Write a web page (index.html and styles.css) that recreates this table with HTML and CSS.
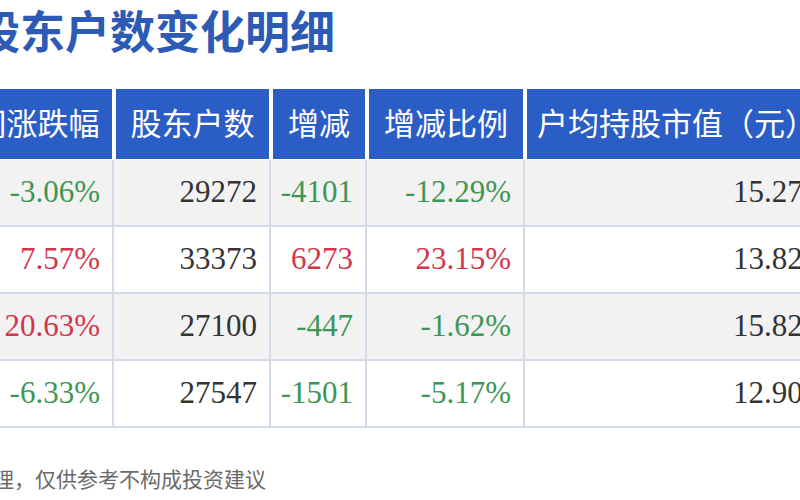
FILE: index.html
```html
<!DOCTYPE html>
<html lang="zh">
<head>
<meta charset="utf-8">
<link rel="stylesheet" href="styles.css">
</head>
<body>
<div class="page">
  <h1 class="title">股东户数变化明细</h1>
  <div class="table">
    <div class="th">区间涨跌幅</div>
    <div class="th">股东户数</div>
    <div class="th">增减</div>
    <div class="th">增减比例</div>
    <div class="th th-wide">户均持股市值（元）</div>

    <div class="td alt down">-3.06%</div>
    <div class="td alt">29272</div>
    <div class="td alt down">-4101</div>
    <div class="td alt down">-12.29%</div>
    <div class="td alt last"><span>15.27</span></div>

    <div class="td up">7.57%</div>
    <div class="td">33373</div>
    <div class="td up">6273</div>
    <div class="td up">23.15%</div>
    <div class="td last"><span>13.82</span></div>

    <div class="td alt up">20.63%</div>
    <div class="td alt">27100</div>
    <div class="td alt down">-447</div>
    <div class="td alt down">-1.62%</div>
    <div class="td alt last"><span>15.82</span></div>

    <div class="td down">-6.33%</div>
    <div class="td">27547</div>
    <div class="td down">-1501</div>
    <div class="td down">-5.17%</div>
    <div class="td last"><span>12.90</span></div>
  </div>
  <p class="note">理，仅供参考不构成投资建议</p>
</div>
</body>
</html>
```
FILE: styles.css
```css
html, body {
  margin: 0;
  padding: 0;
  background: #ffffff;
  width: 800px;
  height: 500px;
  overflow: hidden;
}
.page {
  width: 800px;
  height: 500px;
  overflow: hidden;
  font-family: "Noto Sans CJK SC", "Noto Sans", sans-serif;
}
.title {
  margin: 0 0 29px -25px;
  height: 60px;
  font-size: 45px;
  line-height: 60px;
  font-weight: 700;
  color: #2c5ab4;
  white-space: nowrap;
}
.table {
  display: grid;
  grid-template-columns: 184px 157px 96px 158px 330px;
  grid-template-rows: 71px 67px 67px 67px 67px;
  margin-left: -70px;
  width: 925px;
}
.th {
  box-sizing: border-box;
  background: #2b5dc6;
  color: #ffffff;
  font-size: 31px;
  line-height: 66px;
  text-align: center;
  border-left: 2px solid #ffffff;
  border-right: 2px solid #ffffff;
  border-bottom: 1px solid #ffffff;
  height: 71px;
  white-space: nowrap;
}
.th-wide {
  text-align: left;
  padding-left: 10px;
}
.td {
  box-sizing: border-box;
  font-family: "Liberation Serif", "Times New Roman", serif;
  font-size: 31px;
  line-height: 64px;
  text-align: right;
  padding-right: 12px;
  color: #333333;
  background: #ffffff;
  border-right: 2px solid #d3dbe8;
  border-bottom: 2px solid #d3dbe8;
  white-space: nowrap;
}
.td.alt {
  background: #f2f2f3;
}
.td.last {
  text-align: left;
  padding-left: 208px;
}
.up {
  color: #d2364c;
}
.down {
  color: #3d9653;
}
.note {
  margin: 35px 0 0 -7px;
  font-size: 21px;
  line-height: 30px;
  color: #6a6a6a;
  white-space: nowrap;
}
```
